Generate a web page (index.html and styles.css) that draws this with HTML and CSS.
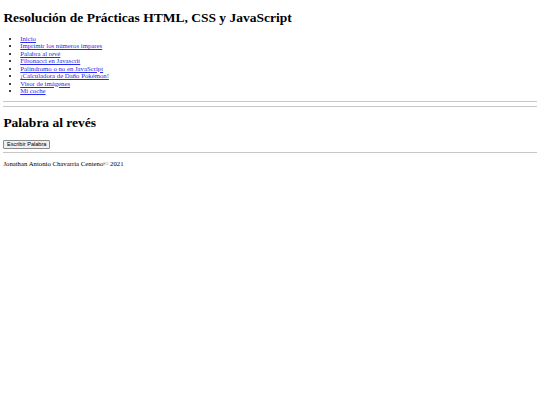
FILE: index.html
```html
<!DOCTYPE html>
<html lang="es">
<head>
<meta charset="utf-8">
<title>Palabra al revés</title>
<link rel="stylesheet" href="styles.css">
</head>
<body>
<header class="site-header">
  <h1 class="site-title">Resolución de Prácticas HTML, CSS y JavaScript</h1>
  <nav class="site-nav">
    <ul class="nav-list">
      <li><a href="#">Inicio</a></li>
      <li><a href="#">Imprimir los números impares</a></li>
      <li><a href="#">Palabra al revé</a></li>
      <li><a href="#">Fibonacci en Javascrit</a></li>
      <li><a href="#">Palíndromo o no en JavaScript</a></li>
      <li><a href="#">¡Calculadora de Daño Pokémon!</a></li>
      <li><a href="#">Visor de imágenes</a></li>
      <li><a href="#">Mi coche</a></li>
    </ul>
  </nav>
  <hr class="rule">
</header>
<main class="content">
  <hr class="rule">
  <h1 class="page-title">Palabra al revés</h1>
  <button class="action" type="button">Escribir Palabra</button>
</main>
<hr class="rule">
<footer class="site-footer">
  <p class="credits">Jonathan Antonio Chavarria Centeno© 2021</p>
</footer>
</body>
</html>
```

FILE: styles.css
```css
html {
  background: #ffffff;
}
body {
  margin: 3.375px;
  font-family: "Liberation Serif", "Times New Roman", serif;
  font-size: 6.75px;
  line-height: 7.47px;
  color: #000000;
}
.site-title,
.page-title {
  font-size: 13.5px;
  line-height: 14.94px;
  font-weight: bold;
  margin: 9.045px 0;
}
.site-title {
  margin-top: 7.5px;
}
.nav-list {
  margin: 6.75px 0;
  padding-left: 16.875px;
  list-style: disc;
}
.nav-list a {
  color: #2a2ae8;
  text-decoration: underline;
}
.rule {
  margin: 3.375px 0;
  border: 0;
  border-top: 1px solid #c6c6c6;
  height: 0;
}
.action {
  font-family: "Liberation Sans", Arial, sans-serif;
  font-size: 5.625px;
  line-height: 6.5px;
  padding: 0.42px 2.53px;
  margin: 0;
  color: #000000;
  background: #efefef;
  border: 1px solid #8a8a8a;
  border-radius: 1px;
  vertical-align: middle;
}
.credits {
  margin: 6.75px 0;
}
```
